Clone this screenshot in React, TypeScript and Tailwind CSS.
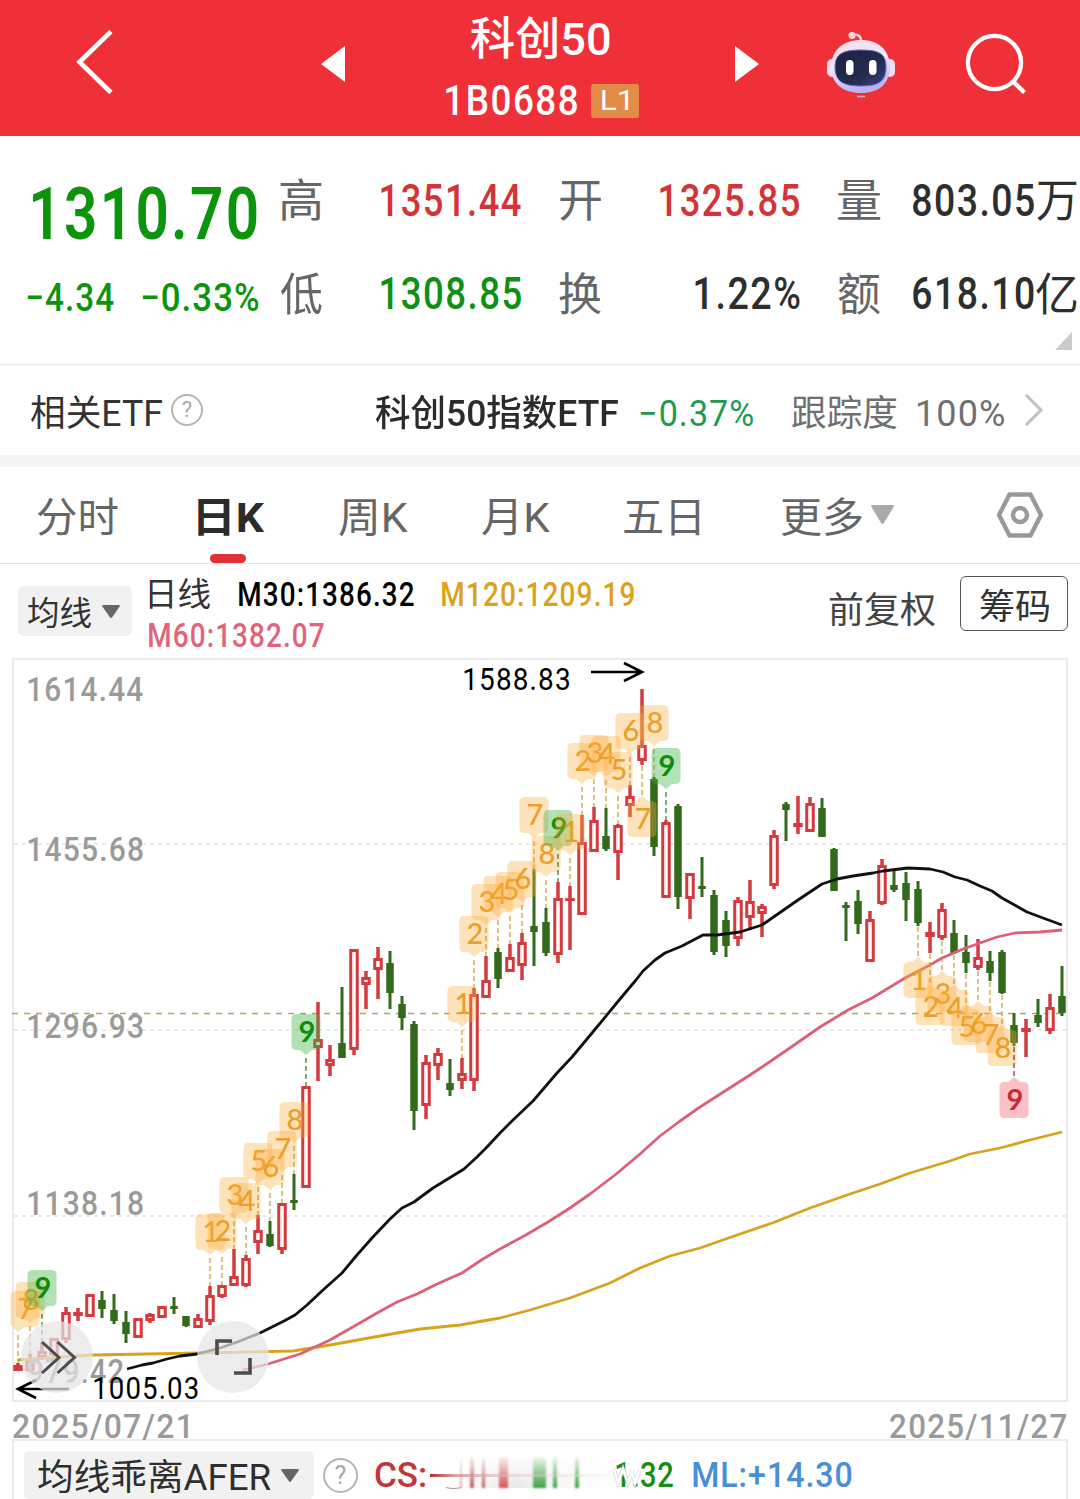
import { useLayoutEffect, useRef } from "react";
import type { ReactNode } from "react";

const FONT = 'Roboto, "Noto Sans CJK SC", sans-serif';

function inkBox(text: string, font: string, spacing: number) {
  const ctx = document.createElement("canvas").getContext("2d")!;
  ctx.font = font;
  const m = ctx.measureText(text);
  return { left: -m.actualBoundingBoxLeft, right: m.actualBoundingBoxRight + spacing * (text.length - 1) };
}

/* Single-line text condensed so that its glyphs fill the width of the box. */
function Fit({ children, className }: { children: string; className: string }) {
  const box = useRef<HTMLDivElement>(null);
  const inner = useRef<HTMLSpanElement>(null);
  useLayoutEffect(() => {
    const el = inner.current!;
    const cs = getComputedStyle(el);
    const ink = inkBox(children, `${cs.fontWeight} ${cs.fontSize} ${FONT}`, parseFloat(cs.letterSpacing) || 0);
    const s = box.current!.clientWidth / (ink.right - ink.left);
    el.style.transform = `translateX(${-ink.left * s}px) scaleX(${s})`;
  }, [children]);
  return (
    <div ref={box} className={"shrink-0 leading-none whitespace-nowrap " + className}>
      <span ref={inner} className="inline-block origin-left">
        {children}
      </span>
    </div>
  );
}

/* The same for a label of the chart: ink from x to x + w, baseline at y. */
function Label(p: { x: number; y: number; w: number; size: number; weight?: number; fill: string; text: string }) {
  const weight = p.weight ?? 400;
  const spacing = p.size * 0.04;
  const ink = inkBox(p.text, `${weight} ${p.size}px ${FONT}`, spacing);
  const s = p.w / (ink.right - ink.left);
  return (
    <text
      transform={`translate(${p.x - ink.left * s} ${p.y}) scale(${s} 1)`}
      fontSize={p.size}
      fontWeight={weight}
      letterSpacing={spacing}
      fill={p.fill}
    >
      {p.text}
    </text>
  );
}

function Question({ className }: { className: string }) {
  return (
    <div className={"flex shrink-0 items-center justify-center rounded-full border-2 border-[#b4b4b4] leading-none text-[#a8a8a8] " + className}>
      ?
    </div>
  );
}

function Robot() {
  return (
    <svg className="mt-[-6px] ml-[67px] h-[66px] w-[70px]" viewBox="826 32 70 66">
      <defs>
        <linearGradient id="head" x1="0" y1="0" x2="0.3" y2="1">
          <stop offset="0" stopColor="#fbdde8" />
          <stop offset="0.5" stopColor="#efe6fb" />
          <stop offset="1" stopColor="#b9b3f5" />
        </linearGradient>
        <linearGradient id="visor" x1="0" y1="0" x2="1" y2="1">
          <stop offset="0" stopColor="#1b2140" />
          <stop offset="0.6" stopColor="#232c4e" />
          <stop offset="1" stopColor="#3c3f80" />
        </linearGradient>
      </defs>
      <path d="M861 41c0-5-3-7-8-6" fill="none" stroke="#f8cfdb" strokeWidth="2.500" />
      <circle cx="852" cy="35.500" r="3.600" fill="#fbd3dc" />
      <rect x="827" y="59" width="10" height="18" rx="5" fill="#f3dcf0" />
      <rect x="885" y="59" width="10" height="18" rx="5" fill="#f3dcf0" />
      <path d="M861 40c18 0 28 10 29 26 0 18-11 27-29 27s-30-9-30-27c1-16 12-26 30-26z" fill="url(#head)" />
      <path d="M861 50c17 0 25 3 25 17 0 15-8 19-25 19s-26-4-26-19c0-14 9-17 26-17z" fill="url(#visor)" stroke="#7668b8" strokeWidth="1" />
      <rect x="846" y="60" width="7.500" height="15" rx="3.700" fill="#fff" />
      <rect x="869" y="60" width="7.500" height="15" rx="3.700" fill="#fff" />
      <path d="M857 96.500h8" stroke="#f5a9b8" strokeWidth="1.500" />
    </svg>
  );
}

function Header() {
  return (
    <header className="flex h-[136px] items-center bg-[#f03038]">
      <svg className="mt-[-12px] ml-[74px] h-[68px] w-[40px]" viewBox="74 28 40 68">
        <path d="M111 31.500L79.500 62 111 92.500" fill="none" stroke="#fff" strokeWidth="4.600" />
      </svg>
      <svg className="mt-[-8px] ml-[207px] h-[36px] w-[24px]" viewBox="0 0 24 36">
        <path d="M24 0v36L0 18z" fill="#fff" />
      </svg>
      <div className="mt-[4px] ml-[100px] flex w-[194px] flex-col items-center">
        <Fit className="mt-[-1px] mr-[4px] w-[139px] text-[45px] font-medium text-white">科创50</Fit>
        <div className="mt-[18px] flex items-center">
          <Fit className="w-[131px] text-[42px] font-medium tracking-[0.04em] text-white">1B0688</Fit>
          <div className="ml-[14px] flex h-[34px] w-[48px] items-center justify-center rounded-[3px] bg-[#e38c48]">
            <Fit className="w-[26px] text-[28px] text-white">L1</Fit>
          </div>
        </div>
      </div>
      <svg className="mt-[-8px] ml-[96px] h-[36px] w-[24px]" viewBox="0 0 24 36">
        <path d="M0 0v36l24-18z" fill="#fff" />
      </svg>
      <Robot />
      <svg className="mt-[-8px] ml-[66px] h-[64px] w-[68px]" viewBox="962 32 68 64">
        <circle cx="994.500" cy="62.500" r="26.600" fill="none" stroke="#fff" strokeWidth="4.200" />
        <path d="M1013 81.500l11.500 11" stroke="#fff" strokeWidth="4.400" />
      </svg>
    </header>
  );
}

function Quote() {
  return (
    <section className="relative flex h-[229px] border-b border-[#e6e6e6]">
      <div className="w-[280px] shrink-0 pt-[36px] text-[#0c940c]">
        <div className="flex h-[84px] items-center pl-[33px]">
          <Fit className="w-[224px] text-[73px] font-semibold tracking-[0.04em]">1310.70</Fit>
        </div>
        <div className="flex h-[84px] items-center pl-[27px]">
          <Fit className="w-[87px] text-[39px] font-medium tracking-[0.03em]">−4.34</Fit>
          <Fit className="ml-[28px] w-[116px] text-[39px] font-medium tracking-[0.03em]">−0.33%</Fit>
        </div>
      </div>
      <div className="w-[800px] shrink-0 pt-[18px] text-[45px] font-medium text-[#2e2e2e]">
        <div className="flex h-[93px] items-center">
          <Fit className="mt-[2px] w-[42px] font-normal text-[#666]">高</Fit>
          <Fit className="ml-[59px] w-[140px] tracking-[0.04em] text-[#d23438]">1351.44</Fit>
          <Fit className="mt-[2px] ml-[39px] w-[41px] font-normal text-[#666]">开</Fit>
          <Fit className="ml-[59px] w-[139px] tracking-[0.04em] text-[#d23438]">1325.85</Fit>
          <Fit className="mt-[2px] ml-[39px] w-[42px] font-normal text-[#666]">量</Fit>
          <Fit className="ml-[33px] w-[121px] tracking-[0.04em]">803.05</Fit>
          <Fit className="mt-[2px] ml-[3px] w-[40px] font-normal">万</Fit>
        </div>
        <div className="flex h-[93px] items-center">
          <Fit className="mt-[3px] w-[42px] font-normal text-[#666]">低</Fit>
          <Fit className="ml-[59px] w-[140px] tracking-[0.04em] text-[#0f8f14]">1308.85</Fit>
          <Fit className="mt-[3px] ml-[38px] w-[42px] font-normal text-[#666]">换</Fit>
          <Fit className="ml-[94px] w-[105px] tracking-[0.04em]">1.22%</Fit>
          <Fit className="mt-[3px] ml-[38px] w-[42px] font-normal text-[#666]">额</Fit>
          <Fit className="ml-[33px] w-[121px] tracking-[0.04em]">618.10</Fit>
          <Fit className="mt-[3px] ml-[2px] w-[41px] font-normal">亿</Fit>
        </div>
      </div>
      <svg className="absolute right-[8px] bottom-[14px] h-[18px] w-[17px]" viewBox="0 0 17 18">
        <path d="M17 0v18H0z" fill="#cacaca" />
      </svg>
    </section>
  );
}

function EtfRow() {
  return (
    <section className="flex h-[90px] items-center pl-[31px] text-[36px] text-[#333]">
      <Fit className="mt-[7px] w-[131px]">相关ETF</Fit>
      <Question className="ml-[9px] h-[32px] w-[32px] text-[22px]" />
      <Fit className="mt-[7px] ml-[172px] w-[243px] font-medium text-[#2b2b2b]">科创50指数ETF</Fit>
      <Fit className="mt-[7px] ml-[22px] w-[113px] tracking-[0.03em] text-[#1f9a52]">−0.37%</Fit>
      <Fit className="mt-[7px] ml-[39px] w-[105px] text-[#707070]">跟踪度</Fit>
      <Fit className="mt-[7px] ml-[21px] w-[86px] tracking-[0.03em] text-[#707070]">100%</Fit>
      <svg className="ml-[20px] h-[34px] w-[20px]" viewBox="0 0 20 34">
        <path d="M2 2l15 15L2 32" fill="none" stroke="#c0c0c0" strokeWidth="3" />
      </svg>
    </section>
  );
}

function Down({ className }: { className: string }) {
  return (
    <svg className={"shrink-0 " + className} viewBox="0 0 24 18" preserveAspectRatio="none">
      <path d="M1.500 0h21q2 0 1 2L13.500 17q-1.500 2-3 0L.5 2q-1-2 1-2z" fill="currentColor" />
    </svg>
  );
}

function Tabs() {
  return (
    <nav className="relative flex h-[97px] items-center border-b border-[#e4e4e4] pb-px pl-[37px] text-[41px] text-[#666]">
      <Fit className="mt-[7px] w-[81px]">分时</Fit>
      <Fit className="mt-[7px] ml-[80px] w-[67px] font-bold text-[#2b2b2b]">日K</Fit>
      <Fit className="mt-[7px] ml-[74px] w-[69px]">周K</Fit>
      <Fit className="mt-[7px] ml-[74px] w-[68px]">月K</Fit>
      <Fit className="mt-[7px] ml-[74px] w-[76px]">五日</Fit>
      <Fit className="mt-[7px] ml-[81px] w-[81px]">更多</Fit>
      <Down className="ml-[9px] h-[19px] w-[23px] text-[#aaa]" />
      <svg className="ml-[100px] h-[50px] w-[52px]" viewBox="0 0 52 50">
        <path d="M15.500 4.500h21L47 25 36.500 45.500h-21L5 25z" fill="none" stroke="#999" strokeWidth="4.400" strokeLinejoin="round" />
        <circle cx="26" cy="25" r="7" fill="none" stroke="#999" strokeWidth="4.400" />
      </svg>
      <div className="absolute bottom-0 left-[210px] h-[9px] w-[36px] rounded-full bg-[#e03236]" />
    </nav>
  );
}

function Indicators() {
  return (
    <section className="flex h-[94px] pl-[18px] text-[33px] text-[#333]">
      <div className="mt-[22px] flex h-[50px] w-[114px] shrink-0 items-center rounded-[5px] bg-[#f1f1f1] pl-[10px]">
        <Fit className="mt-[5px] w-[63px]">均线</Fit>
        <Down className="ml-[11px] h-[13px] w-[18px] text-[#666]" />
      </div>
      <div className="ml-[17px] w-[680px] shrink-0 pt-[10px] font-medium">
        <div className="flex h-[41px] items-center">
          <Fit className="w-[61px] font-normal">日线</Fit>
          <Fit className="ml-[29px] w-[175px] tracking-[0.04em] text-black">M30:1386.32</Fit>
          <Fit className="ml-[28px] w-[192px] tracking-[0.04em] text-[#dba21c]">M120:1209.19</Fit>
        </div>
        <div className="flex h-[41px] items-center">
          <Fit className="w-[175px] tracking-[0.04em] text-[#e0647a]">M60:1382.07</Fit>
        </div>
      </div>
      <Fit className="mt-[29px] w-[106px] text-[36px] text-[#444]">前复权</Fit>
      <div className="mt-[12px] ml-[25px] flex h-[55px] w-[108px] shrink-0 items-center justify-center rounded-[6px] border-[1.5px] border-[#555]">
        <Fit className="mt-[7px] w-[69px] text-[35px]">筹码</Fit>
      </div>
    </section>
  );
}

/* Direction (r = up, g = down), high, low, body top, body bottom; one bar per 12px. */
type Bar = ["r" | "g", number, number, number, number];
const BARS: Bar[] = [
  ["r", 1363, 1371, 1365, 1371], ["r", 1354, 1372, 1360, 1371], ["r", 1342, 1358, 1351, 1358],
  ["r", 1338, 1356, 1338, 1355], ["r", 1307, 1343, 1312, 1340], ["r", 1308, 1321, 1312, 1316],
  ["r", 1294, 1317, 1294, 1317], ["g", 1291, 1318, 1300, 1309], ["g", 1294, 1324, 1310, 1321],
  ["g", 1311, 1343, 1322, 1334], ["r", 1318, 1338, 1318, 1338], ["r", 1313, 1323, 1314, 1321],
  ["r", 1306, 1318, 1306, 1318], ["g", 1297, 1314, 1306, 1309], ["g", 1316, 1327, 1316, 1326],
  ["r", 1314, 1328, 1318, 1328], ["r", 1286, 1325, 1295, 1322], ["r", 1285, 1298, 1285, 1297],
  ["r", 1249, 1286, 1276, 1286], ["r", 1255, 1287, 1258, 1286], ["r", 1215, 1254, 1230, 1243],
  ["g", 1221, 1247, 1234, 1246], ["r", 1203, 1254, 1203, 1250], ["g", 1174, 1210, 1200, 1203],
  ["r", 1086, 1188, 1086, 1188], ["r", 1002, 1081, 1039, 1048], ["r", 1045, 1076, 1059, 1066],
  ["g", 987, 1058, 1043, 1058], ["r", 949, 1055, 949, 1050], ["r", 971, 1009, 977, 985],
  ["r", 947, 999, 958, 970], ["g", 951, 1009, 963, 993], ["g", 996, 1030, 1004, 1018],
  ["g", 1021, 1130, 1024, 1111], ["r", 1055, 1119, 1062, 1106], ["r", 1048, 1080, 1053, 1066],
  ["g", 1059, 1096, 1083, 1090], ["r", 1058, 1089, 1073, 1081], ["r", 988, 1091, 994, 1081],
  ["r", 956, 998, 980, 998], ["g", 948, 988, 952, 979], ["r", 944, 972, 957, 972],
  ["r", 933, 980, 942, 966], ["g", 869, 966, 926, 932], ["g", 908, 956, 922, 953],
  ["r", 882, 963, 898, 955], ["r", 886, 950, 898, 901], ["r", 815, 915, 842, 915],
  ["r", 807, 852, 820, 852], ["g", 808, 851, 836, 849], ["r", 824, 880, 825, 853],
  ["r", 785, 817, 796, 806], ["r", 689, 765, 745, 761], ["g", 777, 856, 779, 847],
  ["r", 820, 898, 822, 898], ["g", 804, 909, 806, 897], ["r", 873, 919, 873, 899],
  ["g", 857, 897, 886, 889], ["g", 890, 955, 895, 952], ["g", 911, 957, 920, 946],
  ["r", 897, 946, 900, 939], ["r", 880, 930, 901, 918], ["r", 904, 937, 906, 914],
  ["r", 830, 889, 835, 886], ["g", 802, 841, 804, 810], ["r", 796, 834, 823, 827],
  ["r", 797, 832, 803, 832], ["g", 798, 837, 808, 837], ["g", 848, 891, 849, 891],
  ["g", 902, 941, 905, 908], ["g", 890, 934, 901, 924], ["r", 911, 962, 919, 962],
  ["r", 859, 905, 865, 904], ["g", 869, 892, 885, 890], ["g", 872, 921, 883, 900],
  ["g", 881, 926, 889, 923], ["r", 922, 953, 932, 937], ["r", 903, 940, 909, 938],
  ["g", 920, 954, 933, 953], ["g", 935, 973, 952, 963], ["r", 939, 970, 957, 968],
  ["g", 951, 981, 961, 973], ["g", 950, 994, 952, 993], ["g", 1013, 1046, 1025, 1043],
  ["r", 1019, 1057, 1028, 1032], ["g", 999, 1027, 1015, 1023], ["r", 994, 1034, 1007, 1031],
  ["g", 966, 1016, 996, 1013],
];

/* Sequence counts: bar index and digit. */
const ABOVE: [number, string][] = [
  [0, "7"], [1, "8"], [2, "9"],
  [16, "1"], [17, "2"], [18, "3"], [19, "4"], [20, "5"], [21, "6"], [22, "7"], [23, "8"], [24, "9"],
  [37, "1"], [38, "2"], [39, "3"], [40, "4"], [41, "5"], [42, "6"], [43, "7"], [44, "8"], [45, "9"],
  [46, "1"], [47, "2"], [48, "3"], [49, "4"], [50, "5"], [51, "6"], [53, "8"], [54, "9"],
];
const BELOW: [number, string][] = [
  [52, "7"], [75, "1"], [76, "2"], [77, "3"], [78, "4"], [79, "5"], [80, "6"], [81, "7"], [82, "8"], [83, "9"],
];

const M30 =
  "127,1369 142,1365 153,1363 167,1359 180,1356 197,1354 220,1348 240,1341 260,1333 284,1321 295,1315 307,1305 323,1290 342,1273 357,1255 372,1238 390,1219 402,1208 414,1202 433,1188 451,1177 464,1169 477,1157 487,1147 500,1133 513,1120 533,1101 557,1073 572,1057 582,1045 597,1027 620,999 636,980 643,971 655,960 665,953 682,946 703,935 717,935 740,932 762,925 775,916 798,900 822,884 837,879 853,876 873,873 883,871 908,868 930,869 943,872 955,877 967,880 980,886 992,891 1002,898 1027,912 1043,918 1062,925";
const M60 =
  "243,1370 268,1364 300,1354 330,1340 365,1320 377,1313 397,1302 417,1294 437,1284 462,1273 483,1259 500,1249 524,1236 548,1222 570,1208 590,1194 615,1175 640,1154 660,1136 680,1121 700,1107 725,1091 750,1075 762,1067 787,1050 820,1027 848,1010 872,998 905,978 930,965 942,958 963,949 980,943 997,937 1015,933 1040,932 1062,930";
const M120 =
  "18,1360 93,1355 200,1353 293,1351 330,1345 380,1336 420,1329 460,1325 500,1318 530,1310 570,1298 610,1283 640,1268 670,1256 700,1248 740,1234 775,1222 810,1208 850,1194 880,1184 910,1173 950,1161 970,1154 1000,1148 1030,1140 1062,1132";

function Candle({ bar, x }: { bar: Bar; x: number }) {
  const [dir, hi, lo, top, bottom] = bar;
  if (dir === "g") {
    return (
      <g fill="#33691a">
        <rect x={x - 1.5} y={hi} width="3" height={lo - hi} />
        <rect x={x - 3.75} y={top} width="7.500" height={bottom - top} />
      </g>
    );
  }
  const h = bottom - top;
  return (
    <g fill="#d43a3e">
      <rect x={x - 1.75} y={hi} width="3.500" height={lo - hi} />
      <rect x={x - 4.75} y={top} width="9.500" height={h} />
      {h > 6.5 && <rect x={x - 1.75} y={top + 3} width="3.500" height={h - 6} fill="#fff" />}
    </g>
  );
}

function Tag({ index, digit, below }: { index: number; digit: string; below?: boolean }) {
  const x = 18 + 12 * index;
  const bar = BARS[index];
  const nine = digit === "9";
  const fill = !nine ? "#fbb040" : below ? "#f0646e" : "#3cb446";
  const ink = !nine ? "#e9a028" : below ? "#c62c36" : "#0b8f0b";
  const dash = !nine ? "#c09a30" : below ? "#8c2a2a" : "#2a7a1a";
  const cx = Math.max(x, 25);
  const top = below ? bar[2] + 36 : bar[1] - 72;
  const l = cx - 14.5;
  const r = cx + 14.5;
  const bottom = top + 36;
  const d = below
    ? `M${l + 5} ${top}H${x - 6}L${x} ${top - 5}L${x + 6} ${top}H${r - 5}Q${r} ${top} ${r} ${top + 5}V${bottom - 5}Q${r} ${bottom} ${r - 5} ${bottom}H${l + 5}Q${l} ${bottom} ${l} ${bottom - 5}V${top + 5}Q${l} ${top} ${l + 5} ${top}z`
    : `M${l + 5} ${top}H${r - 5}Q${r} ${top} ${r} ${top + 5}V${bottom - 5}Q${r} ${bottom} ${r - 5} ${bottom}H${x + 6}L${x} ${bottom + 5}L${x - 6} ${bottom}H${l + 5}Q${l} ${bottom} ${l} ${bottom - 5}V${top + 5}Q${l} ${top} ${l + 5} ${top}z`;
  return (
    <g>
      <path
        d={below ? `M${x} ${bar[2] + 1}V${top - 6}` : `M${x} ${bottom + 8}V${bar[1]}`}
        stroke={dash}
        strokeWidth="1.200"
        strokeDasharray="5 3"
      />
      <path d={d} fill={fill} fillOpacity={nine ? 0.4 : 0.36} />
      <text x={cx + 1} y={top + 28} textAnchor="middle" fontSize="29" fontWeight={nine ? 700 : 500} fill={ink} fontFamily="Lato, sans-serif">
        {digit}
      </text>
    </g>
  );
}

function Chart() {
  return (
    <svg className="block h-[745px] w-[1080px]" viewBox="0 658 1080 745" fontFamily={FONT}>
      <rect x="13" y="659" width="1054" height="742" fill="#fff" stroke="#ebebeb" strokeWidth="2" />
      {[844, 1030, 1216].map((y) => (
        <path key={y} d={`M14 ${y}H1066`} stroke="#e4e4e4" strokeWidth="1.500" strokeDasharray="4 4" />
      ))}
      <path d="M12 1013.500H1066" stroke="#b5a45c" strokeWidth="1.600" strokeDasharray="6 6" />
      {BARS.map((b, i) => (
        <Candle key={i} bar={b} x={18 + 12 * i} />
      ))}
      <g fill="none" strokeLinejoin="round">
        <polyline points={M120} stroke="#d9a21e" strokeWidth="2.800" />
        <polyline points={M60} stroke="#dc6077" strokeWidth="2.800" />
        <polyline points={M30} stroke="#111" strokeWidth="2.800" />
      </g>
      {ABOVE.map(([i, n]) => (
        <Tag key={i} index={i} digit={n} />
      ))}
      {BELOW.map(([i, n]) => (
        <Tag key={i} index={i} digit={n} below />
      ))}
      <Label x={28} y={700.5} w={115} size={34} weight={500} fill="#9a9a9a" text="1614.44" />
      <Label x={28} y={860.5} w={115} size={34} weight={500} fill="#9a9a9a" text="1455.68" />
      <Label x={28} y={1037.5} w={115} size={34} weight={500} fill="#9a9a9a" text="1296.93" />
      <Label x={28} y={1214.5} w={115} size={34} weight={500} fill="#9a9a9a" text="1138.18" />
      <Label x={28} y={1383} w={96} size={34} weight={500} fill="#9a9a9a" text="979.42" />
      <Label x={464} y={690} w={105} size={32} fill="#000" text="1588.83" />
      <Label x={94} y={1399} w={104} size={31} fill="#000" text="1005.03" />
      <g fill="none" stroke="#000" strokeWidth="2.600">
        <path d="M591 672H642M624 663L642 672 624 681" />
        <path d="M69 1389H18M36 1380L18 1389 36 1398" />
      </g>
      <circle cx="57" cy="1357" r="36" fill="#e4e4e4" fillOpacity="0.72" />
      <circle cx="233" cy="1357" r="36" fill="#e4e4e4" fillOpacity="0.72" />
      <g fill="none" stroke="#4c4c4c">
        <path d="M42 1342L59 1357.500 42 1373M57.500 1342L74.500 1357.500 57.500 1373" strokeWidth="3" />
        <path d="M217 1355V1341H232M234 1373H250V1358" strokeWidth="3.600" />
      </g>
    </svg>
  );
}

function Smear() {
  const bars: [number, number, string][] = [
    [460, 2, "#d8a0a0"], [470, 4, "#c05050"], [482, 3, "#b85055"], [499, 9, "#cf4a4a"],
    [533, 13, "#2f9c35"], [553, 4, "#2f9c35"], [575, 4, "#2f9c35"],
  ];
  return (
    <svg className="h-[40px] w-[187px] shrink-0" viewBox="430 1454 187 40">
      <defs>
        <linearGradient id="fade" x1="0" y1="0" x2="0" y2="1">
          <stop offset="0" stopColor="#fff" stopOpacity="1" />
          <stop offset="0.5" stopColor="#fff" stopOpacity="0.5" />
          <stop offset="1" stopColor="#fff" stopOpacity="0" />
        </linearGradient>
        <linearGradient id="dash" gradientUnits="userSpaceOnUse" x1="430" y1="0" x2="610" y2="0">
          <stop offset="0" stopColor="#b02c30" />
          <stop offset="0.15" stopColor="#d08080" stopOpacity="0.7" />
          <stop offset="0.5" stopColor="#e0c0c0" stopOpacity="0.4" />
          <stop offset="1" stopColor="#eee" stopOpacity="0.3" />
        </linearGradient>
        <linearGradient id="haze">
          <stop offset="0" stopColor="#eee" stopOpacity="0" />
          <stop offset="0.4" stopColor="#e6e6e6" />
          <stop offset="1" stopColor="#f2f2f2" stopOpacity="0" />
        </linearGradient>
        <filter id="soft" x="-10%" y="-10%" width="120%" height="120%">
          <feGaussianBlur stdDeviation="0.8" />
        </filter>
      </defs>
      <rect x="450" y="1458" width="164" height="29" fill="url(#haze)" />
      <g filter="url(#soft)">
        {bars.map(([x, w, c]) => (
          <rect key={x} x={x} y="1456" width={w} height="31" rx="1" fill={c} />
        ))}
      </g>
      <path d="M446 1486.500q8 2 15 0" fill="none" stroke="#c08c8c" strokeWidth="1.200" />
      <rect x="444" y="1453" width="172" height="36" fill="url(#fade)" />
      <rect x="430" y="1473" width="180" height="3" fill="url(#dash)" />
    </svg>
  );
}

function Footer() {
  return (
    <>
      <div className="flex h-[36px] items-center justify-between pt-[10px] pr-[14px] pl-[13px] text-[34px] font-medium tracking-[0.04em] text-[#9a9a9a]">
        <Fit className="w-[175px]">2025/07/21</Fit>
        <Fit className="w-[176px]">2025/11/27</Fit>
      </div>
      <div className="mx-[12px] flex h-[60px] items-center border-x-2 border-t-2 border-[#ebebeb] pt-[10px] pl-[10px] text-[35px] font-medium">
        <div className="flex h-[48px] w-[290px] shrink-0 items-center rounded-[5px] bg-[#f1f1f1] pl-[14px]">
          <Fit className="mt-[5px] w-[233px] text-[36px] font-normal text-[#2e2e2e]">均线乖离AFER</Fit>
          <Down className="ml-[10px] h-[13px] w-[18px] text-[#666]" />
        </div>
        <Question className="ml-[9px] h-[35px] w-[35px] text-[25px] font-normal" />
        <Fit className="ml-[17px] w-[50px] text-[#c43438]">CS:</Fit>
        <div className="ml-[5px] flex items-center">
          <Smear />
          <div className="relative">
            <Fit className="ml-[-1px] w-[57px] tracking-[0.02em] text-[#158c18]">1.32</Fit>
            <svg className="absolute top-[6px] left-[-5px] h-[24px] w-[34px]" viewBox="0 4 34 24">
              <path d="M2 9l4 14 5-14 5 14 5-14M19 9l4 14 5-14" fill="none" stroke="#cfcfcf" strokeWidth="3.600" />
              <path d="M2 9l4 14 5-14 5 14 5-14M19 9l4 14 5-14" fill="none" stroke="#fff" strokeWidth="2.400" />
            </svg>
          </div>
        </div>
        <Fit className="ml-[20px] w-[159px] tracking-[0.03em] text-[#4a8ed6]">ML:+14.30</Fit>
      </div>
    </>
  );
}

function Page({ children }: { children: ReactNode }) {
  return (
    <div className="h-[1499px] w-[1080px] overflow-hidden bg-white font-[Roboto,'Noto_Sans_CJK_SC',sans-serif]">{children}</div>
  );
}

export default function App() {
  return (
    <Page>
      <Header />
      <Quote />
      <EtfRow />
      <div className="h-[12px] bg-[#f4f4f4]" />
      <Tabs />
      <Indicators />
      <Chart />
      <Footer />
    </Page>
  );
}
